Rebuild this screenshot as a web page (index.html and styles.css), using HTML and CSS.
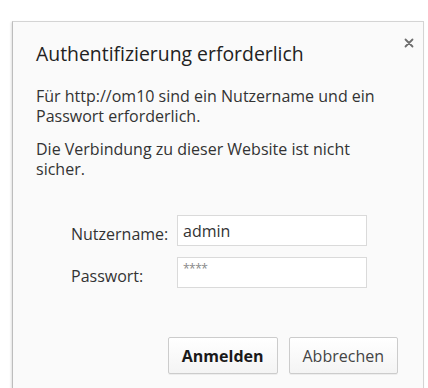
FILE: index.html
```html
<!DOCTYPE html>
<html lang="de">
<head>
    <meta charset="UTF-8">
    <meta name="viewport" content="width=device-width, initial-scale=1.0">
    <title>Authentifizierung erforderlich</title>
    <link rel="stylesheet" href="styles.css">
</head>
<body>
    <div class="auth-dialog">
        <button class="close-btn" aria-label="Schließen">
            <svg width="10" height="10" viewBox="0 0 10 10">
                <path d="M1.5 1.5 L8.5 8.5 M8.5 1.5 L1.5 8.5" stroke="#6e6e6e" stroke-width="1.8" stroke-linecap="round"/>
            </svg>
        </button>

        <h1>Authentifizierung erforderlich</h1>

        <p>Für http://om10 sind ein Nutzername und ein Passwort erforderlich.</p>
        <p>Die Verbindung zu dieser Website ist nicht sicher.</p>

        <form class="login-form">
            <div class="form-row">
                <label for="user">Nutzername:</label>
                <input id="user" type="text" value="admin">
            </div>
            <div class="form-row">
                <label for="pass">Passwort:</label>
                <input id="pass" type="text" class="pass-field" value="****">
            </div>

            <div class="actions">
                <button type="button" class="btn btn-primary">Anmelden</button>
                <button type="button" class="btn">Abbrechen</button>
            </div>
        </form>
    </div>
</body>
</html>
```

FILE: styles.css
```css
body {
    margin: 0;
    background: #ffffff;
    font-family: 'Open Sans', 'Noto Sans', sans-serif;
    color: #333;
}

.auth-dialog {
    position: relative;
    margin: 21px 0 0 12px;
    width: 412px;
    height: 367px;
    box-sizing: border-box;
    background: #fafafa;
    border: 1px solid #d4d4d4;
    border-left-color: #bdbdbd;
    border-bottom: none;
    box-shadow: -1px 1px 2px rgba(0, 0, 0, 0.12);
    padding: 19px 32px 0 23px;
}

.close-btn {
    position: absolute;
    top: 15px;
    right: 8px;
    width: 12px;
    height: 12px;
    padding: 0;
    border: none;
    background: none;
    display: flex;
    align-items: center;
    justify-content: center;
}

h1 {
    margin: 0 0 19px;
    font-size: 19.4px;
    font-weight: 400;
    line-height: 26px;
    color: #222;
}

p {
    margin: 0 0 13px;
    font-size: 16px;
    line-height: 20px;
    color: #333;
}

.login-form {
    margin-top: 36px;
    padding-left: 35px;
}

.form-row {
    display: flex;
    align-items: flex-start;
    margin-bottom: 11px;
}

.form-row label {
    width: 106px;
    padding-top: 9px;
    font-size: 16px;
    line-height: 20px;
    color: #333;
}

.form-row input {
    width: 190px;
    height: 31px;
    box-sizing: border-box;
    border: 1px solid #dadada;
    background: #fff;
    padding: 0 5px;
    font-family: inherit;
    font-size: 16px;
    color: #333;
    outline: none;
}

.form-row .pass-field {
    font-size: 12px;
    letter-spacing: -0.5px;
    color: #888;
    padding-bottom: 9px;
}

.actions {
    display: flex;
    justify-content: flex-end;
    gap: 11px;
    margin-top: 49px;
    margin-right: -7px;
}

.btn {
    height: 37px;
    padding: 0 13px;
    background: linear-gradient(#ffffff, #f4f4f4);
    border: 1px solid #cccccc;
    border-radius: 2px;
    font-family: inherit;
    font-size: 16px;
    color: #444;
    box-shadow: 0 1px 0 rgba(0, 0, 0, 0.05);
}

.btn-primary {
    font-weight: 700;
    color: #1a1a1a;
}
```
